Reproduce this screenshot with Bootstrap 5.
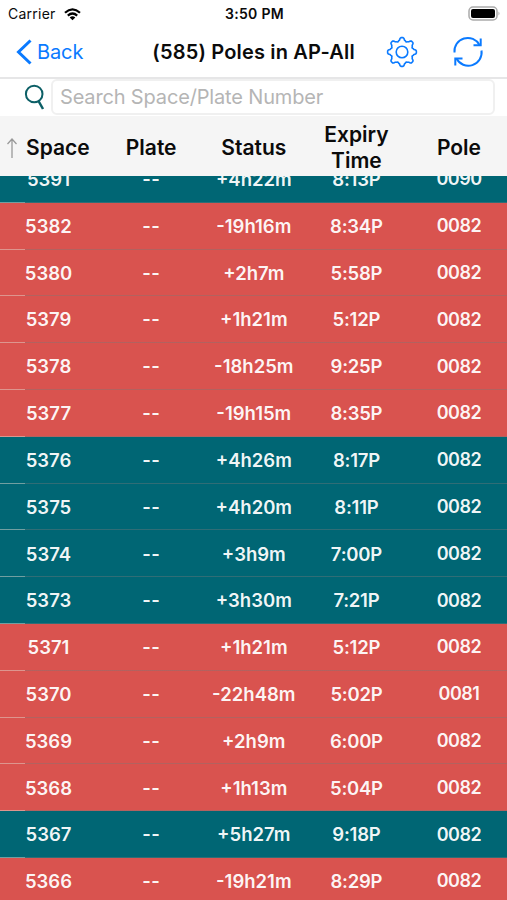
<!DOCTYPE html>
<html lang="en">
<head>
<meta charset="utf-8">
<meta name="viewport" content="width=device-width, initial-scale=1">
<title>Poles in AP-All</title>
<link href="https://cdn.jsdelivr.net/npm/bootstrap@5.3.0/dist/css/bootstrap.min.css" rel="stylesheet">
<style>
body{font-family:Inter,"Liberation Sans",sans-serif;color:#0b0b0b;line-height:1}
.screen{height:900px;width:507px}
.status-bar{height:27px;padding:1px 6px 0 8px;font-size:14px}
.status-side{width:120px}
.carrier{letter-spacing:.25px}
.clock{font-weight:600;letter-spacing:.3px}
.title-bar{height:52px;border-bottom:2px solid #e6e6e7;padding:0 23px 0 16px}
.back-link{color:#0a7aff;font-size:20px;letter-spacing:-.1px}
.page-title{font-size:20px;font-weight:600;letter-spacing:.17px;margin-left:69px}
.refresh{margin-left:34px}
.search-bar{height:39px;padding:0 12px 2px 24px;border-bottom:2px solid #f5f5f5}
.search-field,.search-field:focus{height:36px;border:2px solid #f0f0f0;border-radius:6px;padding:0 7px;font-size:20px;letter-spacing:-.16px;box-shadow:none}
.search-field::placeholder{color:#b5b5b5;opacity:1}
.head-row{height:57.5px;padding-top:2px;background:#f5f5f5;font-size:21px;font-weight:600;line-height:26px}
.cell-first{width:97px;margin-right:2.9px}
.cell-rest{width:102.6px}
.list-area{height:724.5px}
.pole-row{height:46.82px;color:rgba(255,255,255,.95);font-size:18.5px;font-weight:600;position:relative}
.pole-row:last-child{margin-bottom:-4.9px}
.pole-row::after{content:"";position:absolute;left:0;right:0;bottom:0;height:1px;background:linear-gradient(90deg,rgba(225,215,205,.5) 25px,rgba(120,120,120,.4) 25px)}
.pole-number{font-size:18px;letter-spacing:-.5px}
.plate-number{letter-spacing:.3px}
.time-value{letter-spacing:-.25px}
.active-row{background:#006674}
.expired-row{background:#d9534f}
</style>
<script src="https://cdn.jsdelivr.net/npm/bootstrap@5.3.0/dist/js/bootstrap.bundle.min.js"></script>
</head>
<body class="bg-white overflow-hidden">
<div class="screen d-flex flex-column overflow-hidden">
  <div class="status-bar d-flex align-items-center justify-content-between flex-shrink-0">
    <div class="d-flex align-items-center status-side"><span class="carrier">Carrier</span>
      <svg class="ms-2" width="17" height="13" viewBox="0 0 17 13" fill="none" stroke="#000" stroke-width="2.2"><path d="M1 4.8Q8.5-2 16 4.8M3.800 7.600Q8.500 3.400 13.200 7.600"/><path d="M5.700 9.500Q8.500 7 11.300 9.500L8.500 12.300Z" fill="#000" stroke="none"/></svg>
    </div>
    <div class="clock">3:50 PM</div>
    <div class="text-end status-side"><svg width="33" height="16" viewBox="0 0 33 16"><rect x="1" y="1" width="28" height="13" rx="4" fill="#fff" stroke="#aaa" stroke-width="1.5"/><rect x="3" y="3" width="24" height="9" rx="2" fill="#000"/><path d="M30.500 5.500q2 2 0 4z" fill="#aaa"/></svg></div>
  </div>
  <nav class="title-bar d-flex align-items-center flex-shrink-0">
    <a href="#" class="back-link text-decoration-none d-flex align-items-center"><svg width="17" height="28" viewBox="0 0 17 28" fill="none" stroke="#0a7aff" stroke-width="3"><path d="M14.500 2.500 2.500 14l12 11.500"/></svg><span class="ps-1">Back</span></a>
    <h1 class="page-title mb-0 text-nowrap">(585) Poles in AP-All</h1>
    <svg class="ms-auto" width="32" height="32" viewBox="-16 -16 32 32" fill="none" stroke="#0a7aff" stroke-width="1.6" stroke-linejoin="round"><path id="gear-edge"/><circle r="5.800"/></svg>
    <svg class="refresh" width="32" height="32" viewBox="0 0 32 32" fill="none" stroke="#0a7aff" stroke-width="2"><path d="M2.500 16.500A13.300 13.300 0 0 1 27.500 9M29.500 14.500A13.300 13.300 0 0 1 4.500 22.500"/><path d="M28.700 2.500V9.300H21.500M3.300 29.500V22.500H10.500"/></svg>
  </nav>
  <div class="search-bar d-flex align-items-center flex-shrink-0">
    <svg class="flex-shrink-0" width="27" height="26" viewBox="0 0 27 26" fill="none" stroke="#0c5f66" stroke-width="2"><circle cx="10.200" cy="10" r="8.300"/><path d="m14.500 17 4.500 8" stroke-width="2.500"/></svg>
    <input class="form-control search-field" placeholder="Search Space/Plate Number" aria-label="Search">
  </div>
  <div class="head-row d-flex align-items-center text-center flex-shrink-0">
    <div class="cell-first d-flex align-items-center flex-shrink-0"><svg class="flex-shrink-0" width="26" height="22" viewBox="0 0 26 22" fill="none" stroke="#999" stroke-width="1.300"><path d="M12 21V2M7.500 7 12 2l4.500 5"/></svg><span>Space</span></div>
    <div class="cell-rest flex-shrink-0">Plate</div>
    <div class="cell-rest flex-shrink-0">Status</div>
    <div class="cell-rest flex-shrink-0">Expiry<br>Time</div>
    <div class="cell-rest flex-shrink-0">Pole</div>
  </div>
  <div id="poles" class="list-area d-flex flex-column justify-content-end overflow-hidden flex-shrink-0"></div>
</div>
<script>
const poles = [
  ["5391","+4h22m","8:13P","0090",1],["5382","-19h16m","8:34P","0082",0],["5380","+2h7m","5:58P","0082",0],
  ["5379","+1h21m","5:12P","0082",0],["5378","-18h25m","9:25P","0082",0],["5377","-19h15m","8:35P","0082",0],
  ["5376","+4h26m","8:17P","0082",1],["5375","+4h20m","8:11P","0082",1],["5374","+3h9m","7:00P","0082",1],
  ["5373","+3h30m","7:21P","0082",1],["5371","+1h21m","5:12P","0082",0],["5370","-22h48m","5:02P","0081",0],
  ["5369","+2h9m","6:00P","0082",0],["5368","+1h13m","5:04P","0082",0],["5367","+5h27m","9:18P","0082",1],
  ["5366","-19h21m","8:29P","0082",0]];
document.getElementById("poles").innerHTML = poles.map(([space, status, expiry, pole, active]) =>
  `<div class="pole-row d-flex align-items-center text-center flex-shrink-0 ${active ? "active-row" : "expired-row"}">
    <div class="cell-first flex-shrink-0">${space}</div>
    <div class="cell-rest flex-shrink-0 plate-number">--</div>
    <div class="cell-rest flex-shrink-0">${status}</div>
    <div class="cell-rest flex-shrink-0 time-value">${expiry}</div>
    <div class="cell-rest flex-shrink-0 pole-number">${pole}</div>
  </div>`).join("");

// Eight-tooth gear outline: each tooth is a rounded crown over a wider root.
let d = "";
for (let i = 0; i < 8; i++) {
  [[-22.5, 10.9], [-15, 11.9], [-11.5, 12.2], [-8, 13.8], [-4, 14.4], [4, 14.4], [8, 13.8], [11.5, 12.2], [15, 11.9]].forEach(([a, r], k) => {
    const t = (i * 45 + a) * Math.PI / 180;
    d += (i || k ? "L" : "M") + (r * Math.cos(t)).toFixed(2) + " " + (r * Math.sin(t)).toFixed(2);
  });
}
document.getElementById("gear-edge").setAttribute("d", d + "Z");
</script>
</body>
</html>
